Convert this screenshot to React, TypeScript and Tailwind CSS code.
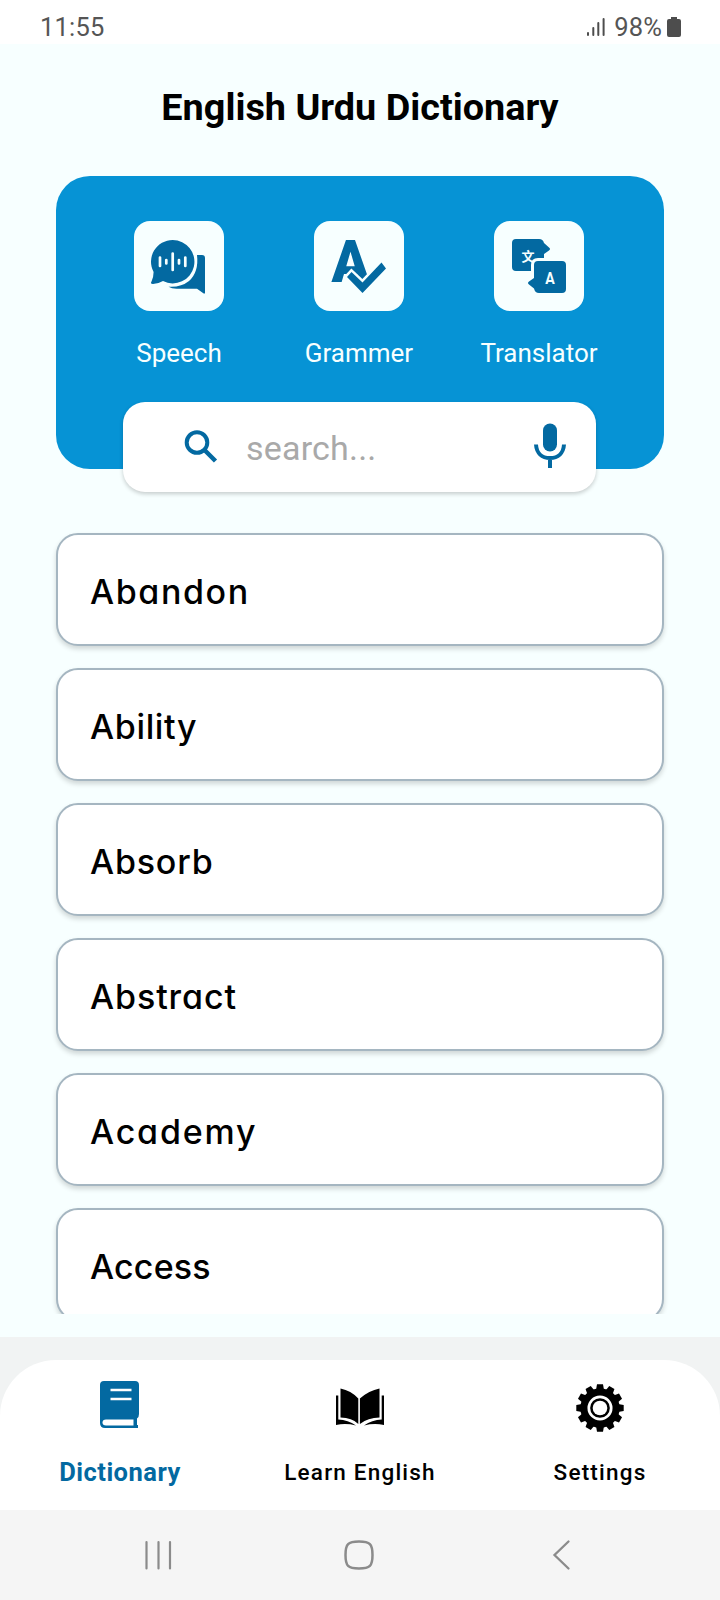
import React, { useState } from 'react';

type Word = {
    text: string;
    tracking: string;
}

const words: Word[] = [
    { text: 'Abandon', tracking: 'tracking-[1.600px]' },
    { text: 'Ability', tracking: 'tracking-[0.650px]' },
    { text: 'Absorb', tracking: 'tracking-[0.800px]' },
    { text: 'Abstract', tracking: 'tracking-[0.900px]' },
    { text: 'Academy', tracking: 'tracking-[1.800px]' },
    { text: 'Access', tracking: 'tracking-[0.200px]' },
];

const SpeechIcon = () => (
    <svg width="90" height="90" viewBox="0 0 90 90" fill="#0369a1">
        <path d="M63 34H68Q71 34 71 37V71.500Q71 73.500 69 72L63 67.700H44Q38 68 34.500 65.700Q47 66.500 55 60Q65 51 63 34Z" />
        <path d="M38.700 19A21.700 21.700 0 1 1 29 60.100Q25 62.500 19 63Q16 63 17.500 60.500Q19.500 57 19.600 51A21.700 21.700 0 0 1 38.700 19Z" />
        <g stroke="#f7ffff" strokeLinecap="round" strokeWidth="2.700">
            <path d="M26 36.500V45M32.300 39V42.500M38.700 32.500V49M45 39V42.500M51.300 36.500V45" />
        </g>
    </svg>
);

const GrammerIcon = () => (
    <svg width="90" height="90" viewBox="0 0 90 90" fill="#0369a1">
        <text x="17.500" y="61" fontSize="60" fontWeight="900" fontFamily="Roboto, sans-serif" textLength="38" lengthAdjust="spacingAndGlyphs">A</text>
        <path d="M33 56L37.500 51L48.500 61.500L67.500 41.500L72 47.500L48.500 72Z" stroke="#f7ffff" strokeWidth="5" />
        <path d="M33 56L37.500 51L48.500 61.500L67.500 41.500L72 47.500L48.500 72Z" />
    </svg>
);

const TranslatorIcon = () => (
    <svg width="90" height="90" viewBox="0 0 90 90" fill="#0369a1">
        <path d="M22 18H45Q49 18 50 22L55 26.500Q57 28 55 29.500L50 33V50H22Q18 50 18 46V22Q18 18 22 18Z" />
        <text x="34" y="39.500" fontSize="13" fontWeight="700" textAnchor="middle" fill="#f7ffff" fontFamily="'Noto Sans CJK SC', sans-serif">文</text>
        <path d="M44 40H68Q72 40 72 44V68Q72 72 68 72H45Q41 72 40 67.500L35 63.500Q33 62 35 60.500L40 57V44Q40 40 44 40Z" stroke="#f7ffff" strokeWidth="6" />
        <path d="M44 40H68Q72 40 72 44V68Q72 72 68 72H45Q41 72 40 67.500L35 63.500Q33 62 35 60.500L40 57V44Q40 40 44 40Z" />
        <text x="56" y="62.500" fontSize="17" fontWeight="700" textAnchor="middle" fill="#f7ffff" fontFamily="Roboto, sans-serif" textLength="9.500" lengthAdjust="spacingAndGlyphs">A</text>
    </svg>
);

const BookIcon = () => (
    <svg width="50" height="50" viewBox="0 0 50 50" className="relative -top-[3px]">
        <path d="M9 2H40Q44 2 44 6V35Q44 38.500 42 39.500V46H43V49H10Q5 49 5 44V6Q5 2 9 2Z" fill="#0369a1" />
        <path d="M11 40.500H38.500V46.500H11Q7.500 46.500 7.500 43.500T11 40.500Z" fill="#fff" />
        <path d="M15.500 11H36.500M15.500 20H36.500" stroke="#fff" strokeWidth="2.300" />
    </svg>
);

const OpenBookIcon = () => (
    <svg width="50" height="50" viewBox="0 0 50 50" className="relative -top-0.5">
        <path d="M5.500 8.500Q16 10.500 23.300 18.500V44Q17 37.500 5.500 37.500Z" />
        <path d="M44.500 8.500Q34 10.500 24.900 18.500V44Q33 37.500 44.500 37.500Z" />
        <path d="M1 15.500H3.300V39.500Q13 40 21 45.500Q11 43 1 45Z" />
        <path d="M49 15.500H46.700V39.500Q37 40 29 45.500Q39 43 49 45Z" />
    </svg>
);

const teeth = Array.from({ length: 12 }, (_, i) => i * 30);

const GearIcon = () => (
    <svg width="50" height="50" viewBox="0 0 50 50" className="relative -left-[0.500px] top-[0.500px]">
        <circle cx="25" cy="25" r="19.700" />
        {teeth.map((deg) => (
            <path key={deg} d="M21 7L22 1.300H28L29 7Z" transform={`rotate(${deg} 25 25)`} />
        ))}
        <circle cx="25" cy="25" r="11.200" fill="none" stroke="#fff" strokeWidth="2.700" />
        <circle cx="25" cy="25" r="7.300" fill="#fff" />
    </svg>
);

const SearchIcon = () => (
    <svg width="36" height="36" viewBox="0 0 36 36" fill="none" stroke="#0369a1" className="-mt-0.5">
        <circle cx="14" cy="14.500" r="10.300" strokeWidth="4" />
        <path d="M21.500 22L32.500 33" strokeWidth="4.500" />
    </svg>
);

const MicIcon = () => (
    <svg width="36" height="46" viewBox="0 0 36 46" className="-mt-0.5">
        <rect x="11" y="0.500" width="14" height="28" rx="7" fill="#0369a1" />
        <path d="M4 21.500C4.500 30 10 35 18 35S31.500 30 32 21.500M18 35V45" fill="none" stroke="#0369a1" strokeWidth="4" />
    </svg>
);

const features = [
    { label: 'Speech', icon: <SpeechIcon /> },
    { label: 'Grammer', icon: <GrammerIcon /> },
    { label: 'Translator', icon: <TranslatorIcon /> },
];

const tabs = [
    { label: 'Dictionary', icon: <BookIcon /> },
    { label: 'Learn English', icon: <OpenBookIcon /> },
    { label: 'Settings', icon: <GearIcon /> },
];

const StatusBar = () => (
    <div className="h-11 shrink-0 bg-white flex items-center justify-between pl-10 pr-[38px] pt-3 text-[25.500px] leading-none text-[#555555]">
        <span className="tracking-[0.2px]">11:55</span>
        <div className="flex items-center">
            <svg width="20" height="20" viewBox="0 0 20 20" stroke="#4d4d4d" strokeWidth="2" strokeLinecap="round" className="mr-2 -mt-0.5">
                <path d="M2 16V18M7.300 11V18M12.300 6V18M17.600 2V18" />
            </svg>
            <span className="tracking-[0.100px]">98%</span>
            <svg width="16" height="22" viewBox="0 0 16 22" fill="#4d4d4d" className="ml-1 -mt-[3px]">
                <path d="M5 1H11V3H13Q15 3 15 5V19Q15 21 13 21H3Q1 21 1 19V5Q1 3 3 3H5Z" />
            </svg>
        </div>
    </div>
);

export default function App() {
    const [activeTab, setActiveTab] = useState<string>('Dictionary');
    const [keyword, setKeyword] = useState<string>('');

    return (
        <div className="w-[720px] h-[1600px] overflow-hidden flex flex-col bg-[#f7ffff] font-[Roboto,sans-serif]">
            <StatusBar />
            <h1 className="h-[132px] shrink-0 pt-10 text-center text-[37.800px] leading-[46px] font-bold text-black">
                English Urdu Dictionary
            </h1>

            {/* Feature shortcuts */}
            <section className="mx-14 h-[293px] shrink-0 rounded-[34px] bg-[#0693d5] pl-[33px] pt-[45px] flex">
                {features.map((f) => (
                    <div key={f.label} className="w-[180px] shrink-0 flex flex-col items-center">
                        <div className="size-[90px] rounded-2xl bg-[#f7ffff]">{f.icon}</div>
                        <span className="mt-[26px] text-[26px] leading-8 text-[#f7ffff]">{f.label}</span>
                    </div>
                ))}
            </section>

            {/* Search bar hangs over the bottom edge of the panel */}
            <div className="relative -mt-[67px] ml-[123px] w-[473px] h-[90px] shrink-0 rounded-[22px] bg-white shadow-[0_2px_4px_rgba(0,0,0,0.2)] flex items-center pl-[60px] pr-7">
                <SearchIcon />
                <input
                    value={keyword}
                    onChange={(e) => setKeyword(e.target.value)}
                    placeholder="search..."
                    className="ml-[27px] mt-0.5 w-0 flex-1 outline-none text-[34px] tracking-[0.200px] placeholder:text-[#a9a9a9]"
                />
                <MicIcon />
            </div>

            {/* Word list */}
            <div className="mt-[33px] h-[789px] shrink-0 overflow-hidden px-14 pt-2 flex flex-col gap-[22px]">
                {words.map((w) => (
                    <div key={w.text} className="h-[113px] shrink-0 rounded-[22px] border-2 border-[#a5b6c1] bg-white shadow-[0_3px_5px_rgba(0,0,0,0.16)] flex items-center pl-8 pt-1">
                        <span className={`font-[Inter,sans-serif] font-medium text-[34px] leading-none text-black [font-feature-settings:'cv11','ss03'] ${w.tracking}`}>{w.text}</span>
                    </div>
                ))}
            </div>

            <div className="mt-[23px] h-[173px] shrink-0 bg-[#f1f3f3] pt-[23px]">
                <nav className="h-[150px] rounded-t-[56px] bg-white flex">
                    {tabs.map((tab) => (
                        <button key={tab.label} onClick={() => setActiveTab(tab.label)} className="w-60 flex flex-col items-center pt-[22px]">
                            {tab.icon}
                            <span className={`mt-[24px] leading-8 whitespace-nowrap ${activeTab === tab.label ? 'text-[25.500px] font-bold tracking-[0.500px] text-[#0369a1]' : 'text-[22.500px] font-medium tracking-[1.2px] text-black'}`}>
                                {tab.label}
                            </span>
                        </button>
                    ))}
                </nav>
            </div>

            {/* System navigation */}
            <div className="h-[90px] shrink-0 bg-[#f5f5f5] flex items-center pl-[143px]">
                <svg width="32" height="32" viewBox="0 0 32 32" stroke="#8b8b8b" strokeWidth="2.200" strokeLinecap="round">
                    <path d="M3.500 3V29.500M15.500 3V29.500M27 3V29.500" />
                </svg>
                <svg width="32" height="32" viewBox="0 0 32 32" fill="none" stroke="#8b8b8b" strokeWidth="2.500" className="ml-[168px]">
                    <path d="M16 2.500C27 2.500 29.500 5 29.500 16S27 29.500 16 29.500S2.500 27 2.500 16S5 2.500 16 2.500Z" />
                </svg>
                <svg width="22" height="32" viewBox="0 0 22 32" fill="none" stroke="#8b8b8b" strokeWidth="2.300" strokeLinecap="round" className="ml-[177px]">
                    <path d="M16.500 2.500L2.500 16L16.500 29.500" />
                </svg>
            </div>
        </div>
    );
}
